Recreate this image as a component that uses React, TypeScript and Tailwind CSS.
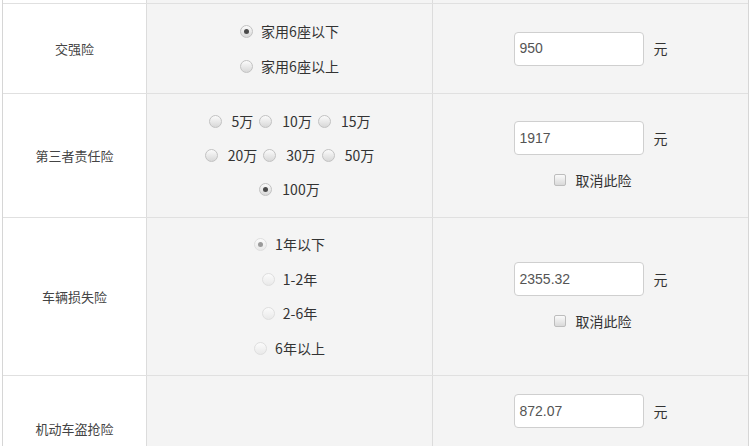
import React from 'react';

const FONT = { fontFamily: '"Noto Sans CJK SC", "Noto Sans", sans-serif' };

type RadioProps = { checked?: boolean; faint?: boolean };

function Radio({ checked, faint }: RadioProps) {
  return (
    <span
      className={
        faint
          ? 'inline-flex h-[13px] w-[13px] shrink-0 items-center justify-center rounded-full border border-[#dedede] bg-gradient-to-b from-[#fbfbfb] to-[#e9e9e9]'
          : 'inline-flex h-[13px] w-[13px] shrink-0 items-center justify-center rounded-full border border-[#c2c2c2] bg-gradient-to-b from-[#fbfbfb] to-[#d8d8d8]'
      }
    >
      {checked && (
        <span
          className={
            faint
              ? 'h-[5px] w-[5px] rounded-full bg-[#9a9a9a]'
              : 'h-[5px] w-[5px] rounded-full bg-[#4a4a4a]'
          }
        ></span>
      )}
    </span>
  );
}

function Checkbox() {
  return (
    <span className="inline-block h-[12px] w-[12px] shrink-0 rounded-[2px] border border-[#bdbdbd] bg-gradient-to-b from-[#fafafa] to-[#d9d9d9]"></span>
  );
}

function Amount({ value, cancel }: { value: string; cancel?: boolean }) {
  return (
    <div className="flex flex-col items-center">
      <div className="flex items-center">
        <div
          className="flex h-[34px] w-[130px] items-center rounded-[4px] border border-[#cfcfcf] bg-white pl-[5px] text-[14px] text-[#555]"
          style={{ fontFamily: '"Liberation Sans", Arial, sans-serif' }}
        >
          {value}
        </div>
        <span className="ml-[10px] text-[14px] text-[#333]">元</span>
      </div>
      {cancel && (
        <div className="mt-[15px] flex h-[20px] items-center gap-[10px] pl-[4px]">
          <Checkbox />
          <span className="text-[14px] text-[#333]">取消此险</span>
        </div>
      )}
    </div>
  );
}

function Label({ text }: { text: string }) {
  return (
    <div className="flex items-center justify-center border-r border-[#dcdcdc] bg-white text-[13px] text-[#444]">
      {text}
    </div>
  );
}

const THIRD_PARTY = [
  ['5万', '10万', '15万'],
  ['20万', '30万', '50万'],
  ['100万'],
];

const AGES = [
  { text: '1年以下', checked: true },
  { text: '1-2年' },
  { text: '2-6年' },
  { text: '6年以上' },
];

export default function App() {
  return (
    <div className="h-[446px] w-[752px] overflow-hidden bg-white" style={FONT}>
      <div className="ml-[2px] w-[747px] border-x border-[#d6d6d6]">
        {/* previous row, cut off */}
        <div className="grid h-[4px] grid-cols-[144px_286px_1fr] border-b border-[#e0e0e0]">
          <div className="border-r border-[#dcdcdc] bg-white"></div>
          <div className="border-r border-[#dcdcdc] bg-[#f4f4f4]"></div>
          <div className="bg-[#f4f4f4]"></div>
        </div>

        {/* 交强险 */}
        <div className="grid h-[90px] grid-cols-[144px_286px_1fr] border-b border-[#e0e0e0]">
          <Label text="交强险" />
          <div className="flex flex-col items-center justify-center border-r border-[#dcdcdc] bg-[#f4f4f4] text-[14px] text-[#333]">
            <div className="flex h-[35px] items-center gap-[8px] pt-[1px]">
              <Radio checked />
              <span>家用6座以下</span>
            </div>
            <div className="flex h-[35px] items-center gap-[8px]">
              <Radio />
              <span>家用6座以上</span>
            </div>
          </div>
          <div className="flex items-center justify-center bg-[#f4f4f4]">
            <Amount value="950" />
          </div>
        </div>

        {/* 第三者责任险 */}
        <div className="grid h-[124px] grid-cols-[144px_286px_1fr] border-b border-[#e0e0e0]">
          <Label text="第三者责任险" />
          <div className="flex flex-col items-center justify-center border-r border-[#dcdcdc] bg-[#f4f4f4] text-[14px] text-[#333]">
            {THIRD_PARTY.map((line, i) => (
              <div key={i} className="flex h-[34px] items-center">
                {line.map((item, j) => (
                  <span key={item} className={j > 0 ? 'ml-[6px] flex items-center gap-[10px]' : 'flex items-center gap-[10px]'}>
                    <Radio checked={item === '100万'} />
                    <span>{item}</span>
                  </span>
                ))}
              </div>
            ))}
          </div>
          <div className="flex items-center justify-center bg-[#f4f4f4]">
            <Amount value="1917" cancel />
          </div>
        </div>

        {/* 车辆损失险 */}
        <div className="grid h-[158px] grid-cols-[144px_286px_1fr] border-b border-[#e0e0e0]">
          <Label text="车辆损失险" />
          <div className="flex flex-col items-center justify-center border-r border-[#dcdcdc] bg-[#f4f4f4] text-[14px] text-[#333]">
            {AGES.map((a) => (
              <div key={a.text} className="flex h-[34.5px] items-center gap-[8px]">
                <Radio faint checked={a.checked} />
                <span>{a.text}</span>
              </div>
            ))}
          </div>
          <div className="flex items-center justify-center bg-[#f4f4f4]">
            <Amount value="2355.32" cancel />
          </div>
        </div>

        {/* 机动车盗抢险 */}
        <div className="grid h-[106px] grid-cols-[144px_286px_1fr] border-b border-[#e0e0e0]">
          <Label text="机动车盗抢险" />
          <div className="border-r border-[#dcdcdc] bg-[#f4f4f4]"></div>
          <div className="flex items-center justify-center bg-[#f4f4f4]">
            <Amount value="872.07" cancel />
          </div>
        </div>
      </div>
    </div>
  );
}
